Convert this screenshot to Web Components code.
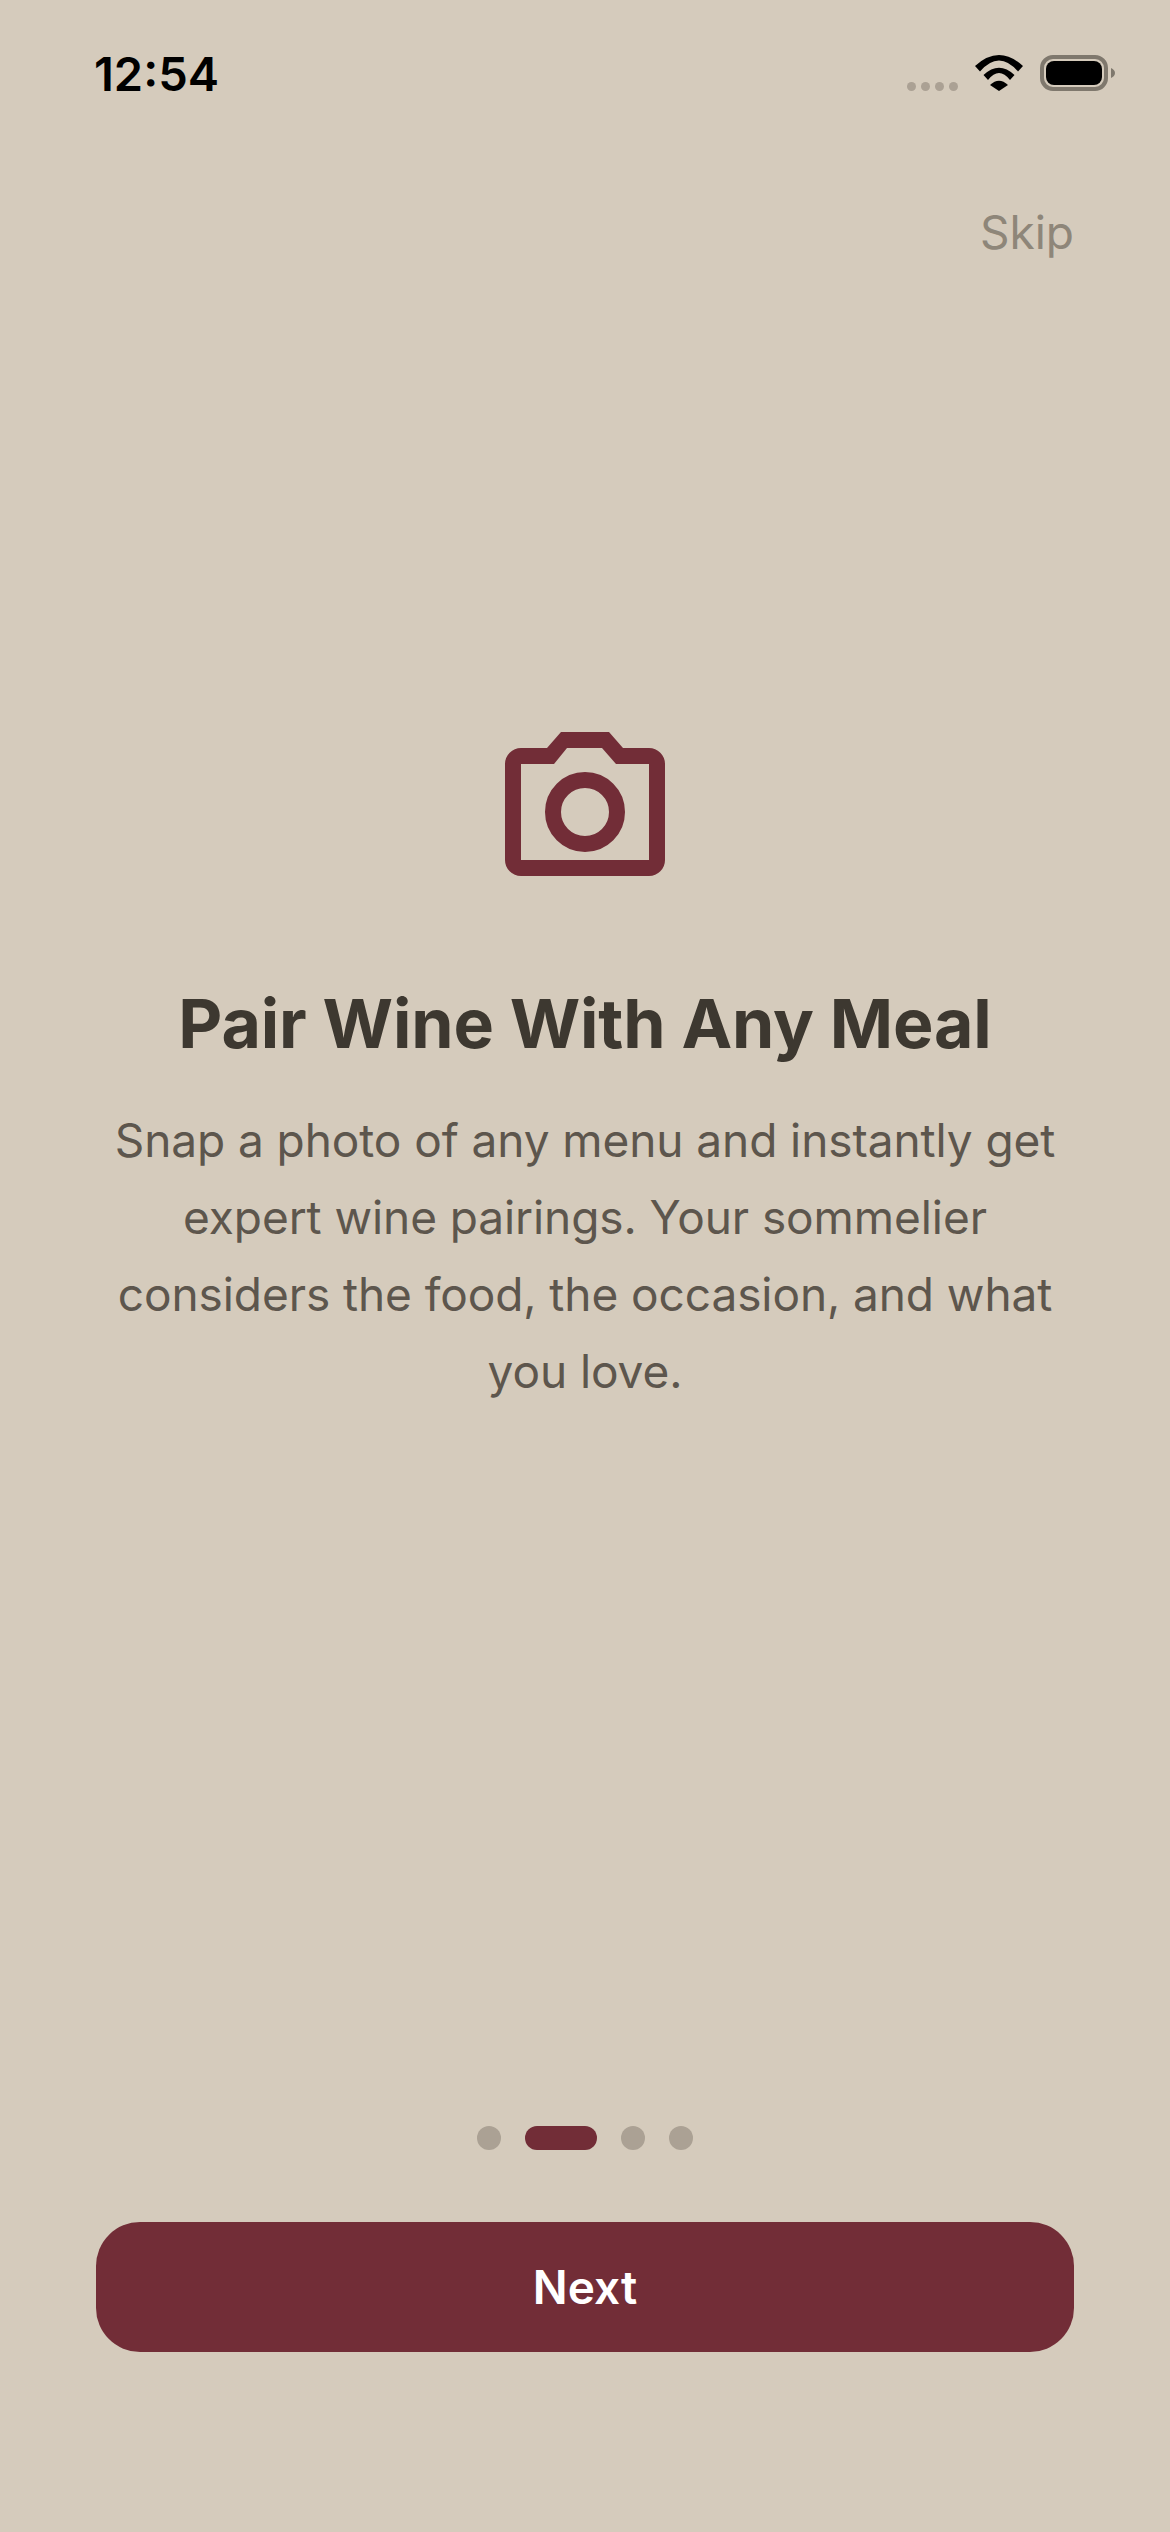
<!DOCTYPE html>
<html>
<head>
<meta charset="utf-8">
<style>
html, body { margin: 0; padding: 0; background: #d5cbbc; overflow: hidden; }
</style>
</head>
<body>
<onboarding-screen>
  <status-bar slot="status"></status-bar>
  <onboarding-page title="Pair Wine With Any Meal">
    Snap a photo of any menu and instantly get expert wine pairings. Your sommelier considers the food, the occasion, and what you love.
  </onboarding-page>
  <page-dots slot="dots" count="4" active="1"></page-dots>
  <next-button slot="action">Next</next-button>
</onboarding-screen>

<script>
class StatusBar extends HTMLElement {
    constructor() {
        super();
        this.attachShadow({ mode: 'open' });
        this.shadowRoot.innerHTML = `
            <style>
            :host { display: flex; justify-content: space-between; align-items: center; height: 62px; padding: 42px 55px 0 94px; font-family: 'Inter', sans-serif; }
            .time { font-size: 47px; font-weight: 600; color: #000; padding-top: 1px; }
            .icons { display: flex; align-items: center; gap: 17px; }
            .signal { display: flex; gap: 5px; align-self: flex-end; }
            .signal i { width: 9px; height: 9px; border-radius: 50%; background: #aba194; }
            svg { display: block; }
            </style>
            <span class="time">12:54</span>
            <div class="icons">
                <div class="signal"><i></i><i></i><i></i><i></i></div>
                <svg width="48" height="36" viewBox="0 0 48 36" fill="#000">
                    <path d="M0 11 Q24 -11 48 11 L43 16.500 Q24 -5.500 5 16.500 Z"/>
                    <path d="M8.500 20 Q24 5.400 39.500 20 L35 25 Q24 11 13 25 Z"/>
                    <path d="M15 30 Q24 21.400 33 30 L24 36 Z"/>
                </svg>
                <svg width="75" height="36" viewBox="0 0 75 36">
                    <rect x="2" y="2" width="64" height="32" rx="11" fill="none" stroke="#7f786d" stroke-width="4"/>
                    <rect x="6" y="6" width="56" height="24" rx="8" fill="#000"/>
                    <path d="M71 13 C73.500 14 75 16 75 18 C75 20 73.500 22 71 23 Z" fill="#7f786d"/>
                </svg>
            </div>
        `;
    }
}

class OnboardingPage extends HTMLElement {
    constructor() {
        super();
        this.attachShadow({ mode: 'open' });
        this.shadowRoot.innerHTML = `
            <style>
            :host { display: flex; flex-direction: column; align-items: center; font-family: 'Inter', sans-serif; }
            svg { display: block; }
            h1 { margin: 106px 0 0; font-size: 68px; line-height: 82px; font-weight: 700; color: #3d3830; letter-spacing: -0.15px; white-space: nowrap; }
            p { margin: 38px 0 0; width: 980px; font-size: 46px; line-height: 77px; font-weight: 400; color: #5d564d; letter-spacing: -0.08px; text-align: center; }
            </style>
            <svg width="160" height="144" viewBox="0 0 160 144">
                <path fill="#722d37" fill-rule="evenodd" d="M16 16 H42 L56 0 H104 L118 16 H144 A16 16 0 0 1 160 32 V128 A16 16 0 0 1 144 144 H16 A16 16 0 0 1 0 128 V32 A16 16 0 0 1 16 16 Z M16 32 V128 H144 V32 H111 L97 16 H62 L49 32 Z"/>
                <circle cx="80" cy="80" r="32" fill="none" stroke="#722d37" stroke-width="16"/>
            </svg>
            <h1></h1>
            <p><slot></slot></p>
        `;
    }

    connectedCallback() {
        this.shadowRoot.querySelector('h1').textContent = this.getAttribute('title');
        this.removeAttribute('title');
    }
}

class PageDots extends HTMLElement {
    constructor() {
        super();
        this.attachShadow({ mode: 'open' });
        this.shadowRoot.innerHTML = `
            <style>
            :host { display: flex; justify-content: center; align-items: center; gap: 24px; }
            i { display: block; width: 24px; height: 24px; border-radius: 12px; background: #aba194; }
            i.active { width: 72px; background: #722d37; }
            </style>
        `;
    }

    connectedCallback() {
        const count = Number(this.getAttribute('count'));
        const active = Number(this.getAttribute('active'));
        for (let n = 0; n < count; n++) {
            const dot = document.createElement('i');
            if (n === active) dot.className = 'active';
            this.shadowRoot.appendChild(dot);
        }
    }
}

class NextButton extends HTMLElement {
    constructor() {
        super();
        this.attachShadow({ mode: 'open' });
        this.shadowRoot.innerHTML = `
            <style>
            :host { display: flex; justify-content: center; align-items: center; height: 130px; border-radius: 44px; background: #722d37; color: #fff; font-family: 'Inter', sans-serif; font-size: 46px; font-weight: 600; }
            </style>
            <slot></slot>
        `;
    }
}

class OnboardingScreen extends HTMLElement {
    constructor() {
        super();
        this.attachShadow({ mode: 'open' });
        this.shadowRoot.innerHTML = `
            <style>
            :host { display: flex; flex-direction: column; height: 2532px; box-sizing: border-box; background: #d5cbbc; }
            .skip { align-self: flex-end; margin: 100px 96px 0 0; font-family: 'Inter', sans-serif; font-size: 46px; line-height: 56px; color: #8e8679; }
            main { margin-top: 472px; flex: 1; }
            footer { display: flex; flex-direction: column; gap: 72px; padding: 0 96px 180px; }
            </style>
            <slot name="status"></slot>
            <span class="skip">Skip</span>
            <main><slot></slot></main>
            <footer>
                <slot name="dots"></slot>
                <slot name="action"></slot>
            </footer>
        `;
    }
}

customElements.define('status-bar', StatusBar);
customElements.define('onboarding-page', OnboardingPage);
customElements.define('page-dots', PageDots);
customElements.define('next-button', NextButton);
customElements.define('onboarding-screen', OnboardingScreen);
</script>
</body>
</html>
